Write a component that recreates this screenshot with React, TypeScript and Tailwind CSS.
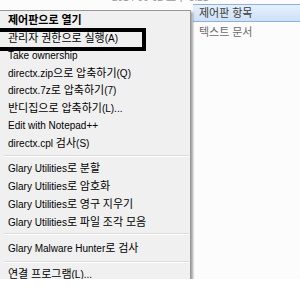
import React from "react";

const font = "font-['Liberation_Sans','Noto_Sans_CJK_KR',sans-serif]";

type Item =
  | { label: string; bold?: boolean; h: string }
  | { sep: true; h: string; off: string };

const items: Item[] = [
  { label: "제어판으로 열기", bold: true, h: "h-[17.5px]" },
  { label: "관리자 권한으로 실행(A)", h: "h-[17.5px]" },
  { label: "Take ownership", h: "h-[17.5px]" },
  { label: "directx.zip으로 압축하기(Q)", h: "h-[17.5px]" },
  { label: "directx.7z로 압축하기(7)", h: "h-[17.5px]" },
  { label: "반디집으로 압축하기(L)...", h: "h-[17.5px]" },
  { label: "Edit with Notepad++", h: "h-[17.5px]" },
  { label: "directx.cpl 검사(S)", h: "h-[17.5px]" },
  { sep: true, h: "h-[7px]", off: "pt-[3px]" },
  { label: "Glary Utilities로 분할", h: "h-[18px]" },
  { label: "Glary Utilities로 암호화", h: "h-[18px]" },
  { label: "Glary Utilities로 영구 지우기", h: "h-[18px]" },
  { label: "Glary Utilities로 파일 조각 모음", h: "h-[18px]" },
  { sep: true, h: "h-[8px]", off: "pt-[2px]" },
  { label: "Glary Malware Hunter로 검사", h: "h-[18px]" },
  { sep: true, h: "h-[8px]", off: "pt-[4px]" },
  { label: "연결 프로그램(L)...", h: "h-[18px]" },
];

function Label({ text }: { text: string }) {
  const runs = text.match(/[\uAC00-\uD7A3]+|[^\uAC00-\uD7A3]+/g) ?? [];
  return (
    <>
      {runs.map((r, i) =>
        /[\uAC00-\uD7A3]/.test(r) ? (
          <span key={i} className="text-[11px]">
            {r}
          </span>
        ) : (
          <span key={i} className="whitespace-pre">{r}</span>
        )
      )}
    </>
  );
}

export default function App() {
  return (
    <div className={`w-[300px] h-[300px] bg-white overflow-hidden ${font} text-[10px]`}>
      <div className="relative h-[279px] bg-[#fcfcfc] overflow-hidden">
        {/* explorer list behind the menu */}
        <div className="flex flex-col">
          <div className="h-[4px] overflow-hidden">
            <div className="-mt-[9px] pl-[112px] text-[#9a9a9a] whitespace-nowrap leading-[12px]">
              <Label text="2014-09-02 오후 3:21" />
            </div>
          </div>
          <div className="flex h-[18px]">
            <div className="w-[193px]" />
            <div className="flex-1 flex items-center pl-[6px] border-y border-[#8fb2dc] bg-gradient-to-b from-[#e6f0fc] to-[#cde1f8] text-[#3a3a3a] leading-[12px]">
              <div>
                <Label text="제어판 항목" />
              </div>
            </div>
          </div>
          <div className="flex h-[20px] items-center">
            <div className="w-[193px]" />
            <div className="pl-[6px] text-[#6b6b6b] leading-[12px]">
              <Label text="텍스트 문서" />
            </div>
          </div>
        </div>

        {/* context menu */}
        <div className="absolute left-[-30px] top-[10px] w-[221px] h-[290px] bg-[#f0f0f0] border border-[#979797] shadow-[2px_2px_2px_rgba(0,0,0,0.35)] pt-[1px]">
          <div className="flex flex-col">
            {items.map((it, i) =>
              "sep" in it ? (
                <div key={i} className={`${it.h} ${it.off} flex flex-col pl-[33px] pr-[1px]`}>
                  <div className="border-t border-[#dcdcdc]" />
                  <div className="border-t border-white" />
                </div>
              ) : (
                <div
                  key={i}
                  className={`${it.h} flex items-center pl-[37px] text-black whitespace-nowrap leading-[12px] ${it.bold ? "font-bold" : ""}`}
                >
                  <div>
                    <Label text={it.label} />
                  </div>
                </div>
              )
            )}
          </div>
        </div>

        {/* annotation box */}
        <div className="absolute left-[-10px] top-[28px] w-[156px] h-[23px] border-4 border-black" />
      </div>
    </div>
  );
}
